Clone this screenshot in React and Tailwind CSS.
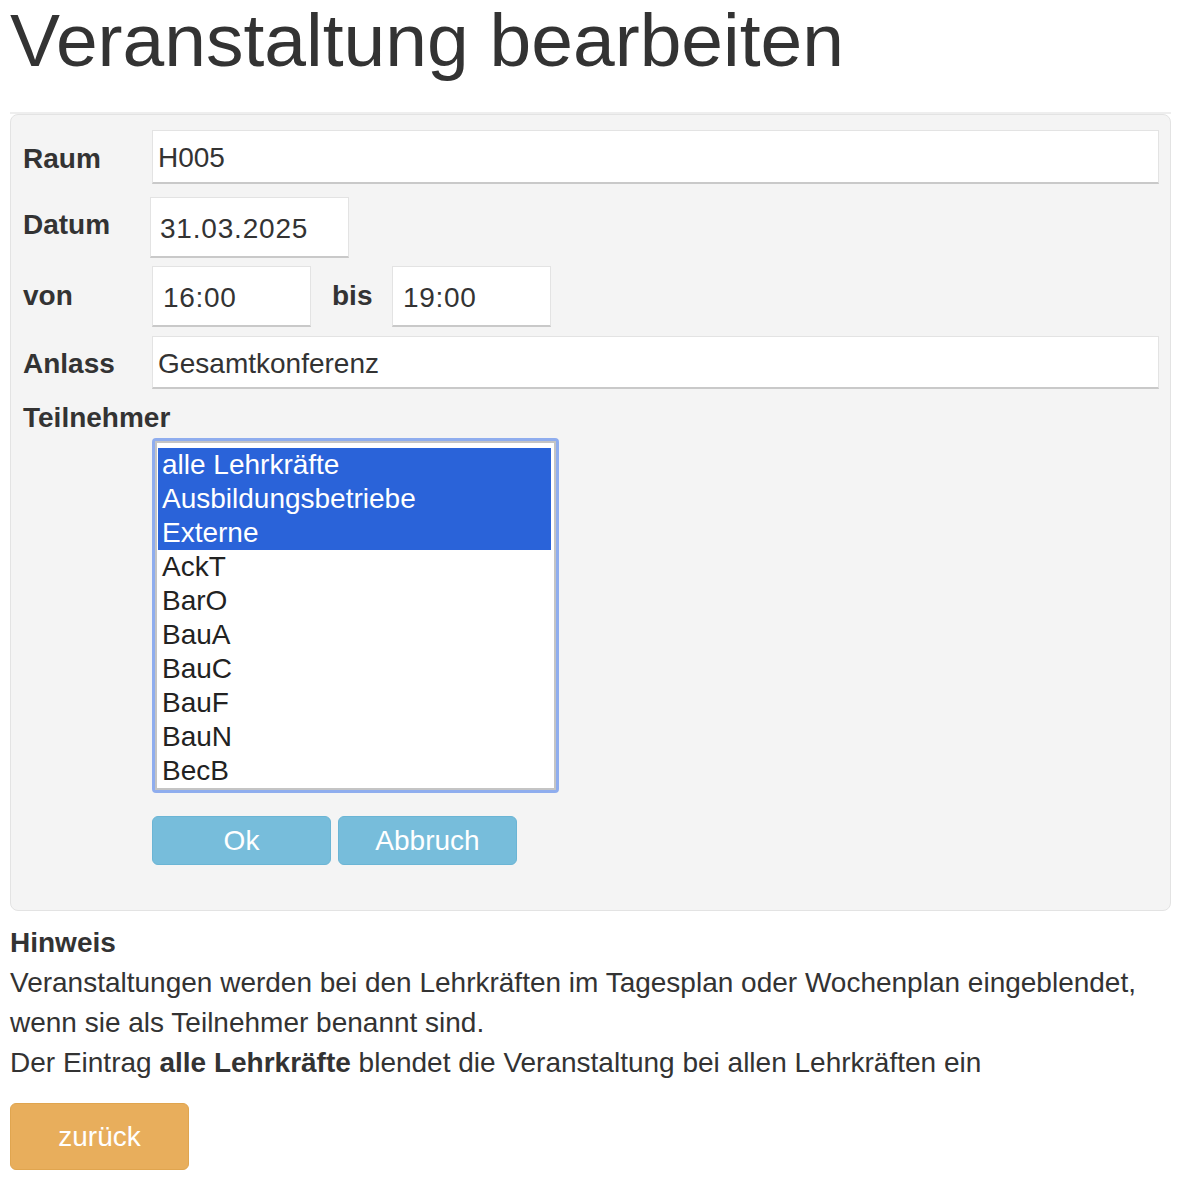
export default function App() {
  const options = [
    { label: "alle Lehrkräfte", sel: true },
    { label: "Ausbildungsbetriebe", sel: true },
    { label: "Externe", sel: true },
    { label: "AckT" },
    { label: "BarO" },
    { label: "BauA" },
    { label: "BauC" },
    { label: "BauF" },
    { label: "BauN" },
    { label: "BecB" },
  ];
  const inputCls =
    "bg-white border border-[#e3e3e3] border-b-2 border-b-[#c9c9c9] text-[28px] flex items-center";
  return (
    <div className="font-['Liberation_Sans',Arial,sans-serif] text-[#333] pl-[10px] pr-[9px] bg-white min-h-[1194px]">
      <h1 className="text-[75px] leading-[80px] font-normal m-0">Veranstaltung bearbeiten</h1>
      <div className="mt-[32px] border-t-2 border-[#eeeeee]" />
      <div className="bg-[#f4f4f4] border border-[#e3e3e3] rounded-[8px] pt-[15px] pl-[12px] pr-[11px] pb-[45px]">
        {/* Raum */}
        <div className="flex items-center">
          <div className="w-[129px] font-bold text-[28px] leading-[40px] mt-[4px]">Raum</div>
          <div className={`flex-1 h-[54px] pl-[5px] pt-[3px] ${inputCls}`}>H005</div>
        </div>
        {/* Datum */}
        <div className="flex items-center mt-[13px]">
          <div className="w-[127px] font-bold text-[28px] leading-[40px] mb-[5px]">Datum</div>
          <div className={`w-[199px] h-[61px] pl-[9px] pt-[4px] tracking-[0.8px] ${inputCls}`}>31.03.2025</div>
        </div>
        {/* von bis */}
        <div className="flex items-center mt-[8px]">
          <div className="w-[129px] font-bold text-[28px] leading-[40px] mb-[1px]">von</div>
          <div className={`w-[159px] h-[61px] pl-[10px] pt-[4px] tracking-[0.7px] ${inputCls}`}>16:00</div>
          <div className="ml-[21px] w-[60px] font-bold text-[28px] leading-[40px] mb-[1px]">bis</div>
          <div className={`w-[159px] h-[61px] pl-[10px] pt-[4px] tracking-[0.7px] ${inputCls}`}>19:00</div>
        </div>
        {/* Anlass */}
        <div className="flex items-center mt-[9px]">
          <div className="w-[129px] font-bold text-[28px] leading-[40px] mt-[3px]">Anlass</div>
          <div className={`flex-1 h-[53px] pl-[5px] pt-[4px] ${inputCls}`}>Gesamtkonferenz</div>
        </div>
        {/* Teilnehmer */}
        <div className="mt-[9px] font-bold text-[28px] leading-[40px]">Teilnehmer</div>
        <div className="ml-[129px] w-[407px] border-[3px] border-[#8fadee] rounded-[4px]">
          <div className="border-2 border-[#c4c4c4]">
            <div className="bg-white pl-[1px] pt-[5px] pr-[3px]">
              {options.map((o) => (
                <div
                  key={o.label}
                  className={
                    o.sel
                      ? "bg-[#2a63d9] text-white text-[28px] leading-[34px] h-[34px] pl-[4px] whitespace-nowrap"
                      : "text-[#222] text-[28px] leading-[34px] h-[34px] pl-[4px] whitespace-nowrap"
                  }
                >
                  {o.label}
                </div>
              ))}
            </div>
          </div>
        </div>
        {/* Buttons */}
        <div className="ml-[129px] mt-[23px] flex gap-[7px]">
          <div className="w-[179px] h-[49px] bg-[#77bddb] border border-[#6bb5d5] rounded-[6px] text-white text-[28px] flex items-center justify-center">
            Ok
          </div>
          <div className="w-[179px] h-[49px] bg-[#77bddb] border border-[#6bb5d5] rounded-[6px] text-white text-[28px] flex items-center justify-center">
            Abbruch
          </div>
        </div>
      </div>
      {/* Hinweis */}
      <div className="mt-[12px] text-[28px] leading-[40px]">
        <div className="font-bold">Hinweis</div>
        <div>
          Veranstaltungen werden bei den Lehrkräften im Tagesplan oder Wochenplan eingeblendet,
          <br />
          wenn sie als Teilnehmer benannt sind.
          <br />
          Der Eintrag <span className="font-bold">alle Lehrkräfte</span> blendet die Veranstaltung bei allen Lehrkräften ein
        </div>
      </div>
      <div className="mt-[20px] w-[179px] h-[67px] bg-[#e8ae5c] border border-[#e0a54f] rounded-[6px] text-white text-[28px] flex items-center justify-center">
        zurück
      </div>
    </div>
  );
}
